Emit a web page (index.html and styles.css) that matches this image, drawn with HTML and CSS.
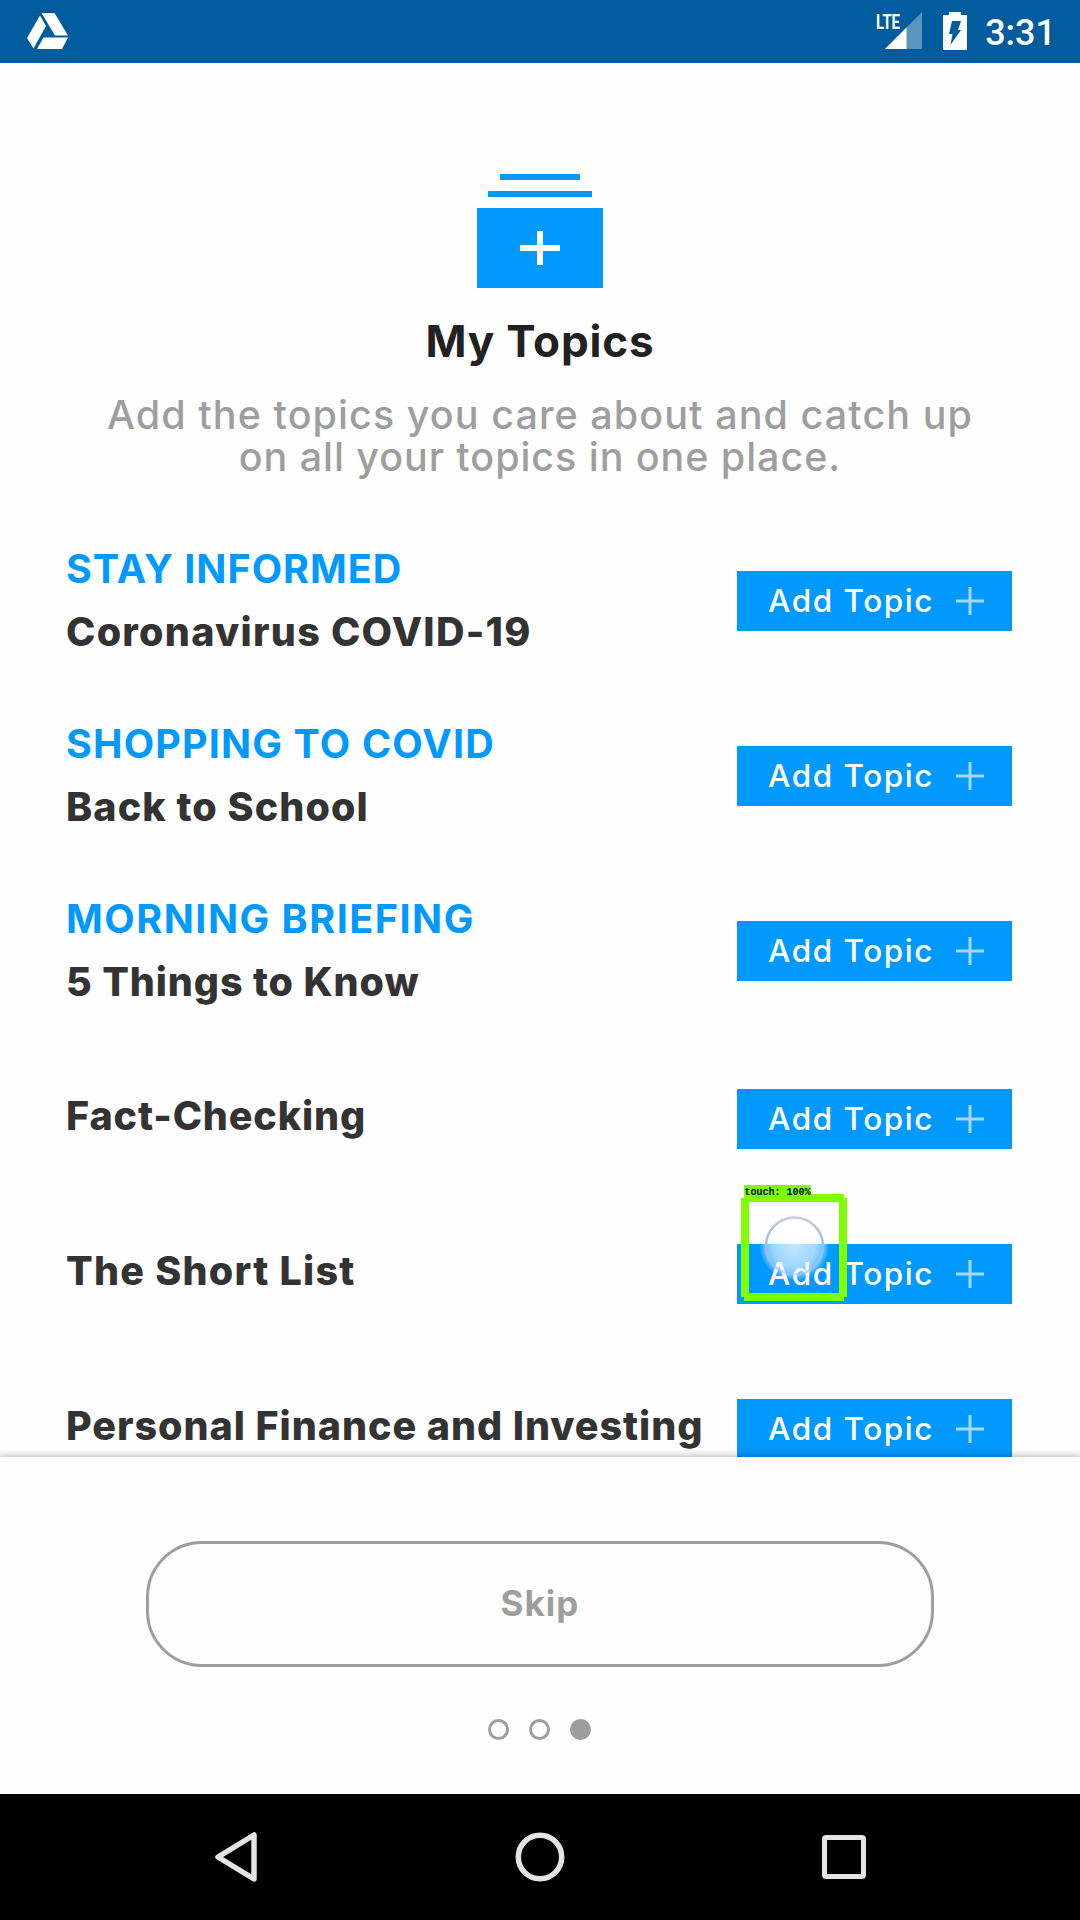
FILE: index.html
```html
<!DOCTYPE html>
<html lang="en">
<head>
<meta charset="utf-8">
<title>My Topics</title>
<link rel="stylesheet" href="styles.css">
</head>
<body>
<header class="status">
  <svg class="drive" width="42" height="38" viewBox="0 0 42 38"><path fill="#fff" d="M14.5 0h13l13.5 22.5H28zM13 2.5l6 10.500L6.500 35.500 0 25zM16.500 24.500h24.500l-6 11.500H10z"/></svg>
  <div class="status-right">
    <svg class="signal" width="50" height="40" viewBox="0 0 50 40"><path fill="#fff" fill-opacity=".35" d="M11 38L48 1v37z"/><path fill="#fff" d="M11 38l21.500-21.500V38z"/><text class="lte" x="2" y="18" textLength="24" lengthAdjust="spacingAndGlyphs">LTE</text></svg>
    <svg class="battery" width="24" height="38" viewBox="0 0 24 38"><path fill="#fff" d="M6 0h12v3h6v35H0V3h6z"/><path fill="#005c9c" d="M9 9h9l-3 9h3L7.500 33l2-11H6z"/></svg>
    <span class="clock">3:31</span>
  </div>
</header>

<main class="content">
  <section class="hero">
    <svg width="126" height="114" viewBox="0 0 126 114"><path fill="#0b98f5" d="M23 0h80v6H23zM11 17h104v6H11z"/><path fill="#0099ff" d="M0 34h126v80H0z"/><path fill="#fff" d="M43 71h40v6H43z"/><path fill="#fff" d="M60 57h6v34h-6z"/></svg>
    <h1 class="title">My Topics</h1>
    <p class="lead"><span class="lead-a">Add the topics you care about and catch up</span><br><span class="lead-b">on all your topics in one place.</span></p>
  </section>

  <ul class="topics">
    <li class="topic tall">
      <div class="label"><span class="category informed">STAY INFORMED</span><span class="name corona">Coronavirus COVID-19</span></div>
      <button class="add"><span>Add Topic</span><svg class="plus" width="28" height="28" viewBox="0 0 28 28"><path d="M0 14h28M14 0v28"/></svg></button>
    </li>
    <li class="topic tall">
      <div class="label"><span class="category shopping">SHOPPING TO COVID</span><span class="name school">Back to School</span></div>
      <button class="add"><span>Add Topic</span><svg class="plus" width="28" height="28" viewBox="0 0 28 28"><path d="M0 14h28M14 0v28"/></svg></button>
    </li>
    <li class="topic tall">
      <div class="label"><span class="category briefing">MORNING BRIEFING</span><span class="name things">5 Things to Know</span></div>
      <button class="add"><span>Add Topic</span><svg class="plus" width="28" height="28" viewBox="0 0 28 28"><path d="M0 14h28M14 0v28"/></svg></button>
    </li>
    <li class="topic">
      <div class="label"><span class="name fact">Fact-Checking</span></div>
      <button class="add"><span>Add Topic</span><svg class="plus" width="28" height="28" viewBox="0 0 28 28"><path d="M0 14h28M14 0v28"/></svg></button>
    </li>
    <li class="topic">
      <div class="label"><span class="name short">The Short List</span></div>
      <button class="add"><span>Add Topic</span><svg class="plus" width="28" height="28" viewBox="0 0 28 28"><path d="M0 14h28M14 0v28"/></svg></button>
      <div class="touch">
        <svg width="106" height="116" viewBox="0 0 106 116">
          <defs>
            <radialGradient id="glow" cx=".5" cy=".5" r=".5"><stop offset="0" stop-color="#fff" stop-opacity=".76"/><stop offset=".6" stop-color="#fff" stop-opacity=".62"/><stop offset=".84" stop-color="#fff" stop-opacity=".4"/><stop offset="1" stop-color="#fff" stop-opacity="0"/></radialGradient>
            <linearGradient id="ring" x1="0" y1="0" x2="0" y2="1"><stop offset="0" stop-color="#c9c7e2"/><stop offset=".5" stop-color="#a3b9e6"/><stop offset="1" stop-color="#a9c4ee" stop-opacity=".6"/></linearGradient>
          </defs>
          <circle cx="53.500" cy="61" r="35" fill="url(#glow)"/>
          <circle cx="53.500" cy="61" r="28.500" fill="none" stroke="url(#ring)" stroke-width="2.500"/>
          <path fill="#7fff00" d="M3 0h67v9h33v4h3v99h-3v4H3v-4H0V13h3zM8 17v91h90V17z" fill-rule="evenodd"/>
          <text class="touch-label" x="3.500" y="10">touch: 100%</text>
        </svg>
      </div>
    </li>
    <li class="topic">
      <div class="label"><span class="name finance">Personal Finance and Investing</span></div>
      <button class="add"><span>Add Topic</span><svg class="plus" width="28" height="28" viewBox="0 0 28 28"><path d="M0 14h28M14 0v28"/></svg></button>
    </li>
  </ul>
</main>

<footer class="footer">
  <button class="skip">Skip</button>
  <div class="dots"><i class="dot"></i><i class="dot"></i><i class="dot on"></i></div>
</footer>

<nav class="nav">
  <svg width="44" height="52" viewBox="0 0 44 52"><path d="M40 4v44L4 26z" fill="none" stroke="#e4e4e4" stroke-width="5.500" stroke-linejoin="round"/></svg>
  <svg width="50" height="52" viewBox="0 0 50 52"><circle cx="25" cy="26" r="21.700" fill="none" stroke="#e4e4e4" stroke-width="5.500"/></svg>
  <svg width="44" height="52" viewBox="0 0 44 52"><rect x="2.500" y="6.500" width="39" height="39" rx="1.500" fill="none" stroke="#e4e4e4" stroke-width="5"/></svg>
</nav>
</body>
</html>
```
FILE: styles.css
```css
* { box-sizing: border-box; }
body {
  margin: 0;
  width: 1080px;
  height: 1920px;
  overflow: hidden;
  display: flex;
  flex-direction: column;
  background: #fefefe;
  font-family: Inter, "Noto Sans", sans-serif;
}
svg { display: block; flex: none; }

.status {
  flex: none;
  height: 63px;
  padding: 0 24px 0 27px;
  display: flex;
  justify-content: space-between;
  align-items: flex-start;
  background: #005c9c;
  color: #fff;
}
.drive { margin-top: 13px; }
.status-right { display: flex; align-items: flex-start; }
.signal { margin-top: 11px; }
.lte { font: 700 20px Roboto, sans-serif; fill: #fff; }
.battery { margin: 12px 18px 0 19px; }
.clock { font: 500 36px/63px Roboto, sans-serif; padding-top: 2px; height: 63px; }

.content { flex: none; height: 1394px; overflow: hidden; }
.hero {
  padding-top: 111px;
  display: flex;
  flex-direction: column;
  align-items: center;
  height: 451px;
}
.title {
  margin: 23px 0 0;
  font-size: 44px;
  line-height: 61px;
  font-weight: 700;
  letter-spacing: .86px;
  color: #212121;
}
.lead {
  margin: 22px 0 0;
  font-size: 39.5px;
  font-weight: 450;
  line-height: 42px;
  text-align: center;
  white-space: nowrap;
  color: #9e9e9e;
}
.lead-a { letter-spacing: 1.06px; }
.lead-b { letter-spacing: .93px; }

.topics { margin: 0; padding: 0; list-style: none; }
.topic {
  position: relative;
  height: 155px;
  padding: 50px 68px 0 66px;
  display: flex;
  justify-content: space-between;
  align-items: flex-start;
}
.label {
  padding-top: 3px;
  display: flex;
  flex-direction: column;
  align-items: flex-start;
  gap: 15px;
  font-size: 39.5px;
  line-height: 48px;
  white-space: nowrap;
}
.tall { height: 175px; padding-top: 57px; }
.tall .label { padding: 0; margin-top: -26px; }
.category { font-weight: 700; color: #0099ff; }
.name { font-weight: 850; color: #333; }
.informed { letter-spacing: .99px; }
.shopping { letter-spacing: 1.15px; }
.briefing { letter-spacing: 1.51px; }
.corona { letter-spacing: 1.26px; }
.school { letter-spacing: 1.09px; }
.things { letter-spacing: .89px; }
.fact { letter-spacing: .84px; }
.short { letter-spacing: 1.25px; }
.finance { letter-spacing: .95px; }

.add {
  width: 275px;
  height: 60px;
  margin: 0;
  padding: 0 28px 0 31px;
  border: 0;
  display: flex;
  justify-content: space-between;
  align-items: center;
  background: #0099ff;
  color: #fff;
  font: 500 31.5px/59px Inter, sans-serif;
  letter-spacing: 1.54px;
}
.add span { padding-bottom: 1px; }
.plus { fill: none; stroke: #a6d9ff; stroke-width: 3; }

.touch { position: absolute; left: 741px; top: -9px; }
.touch-label { font: 700 10px "Liberation Mono", monospace; fill: #000; }

.footer {
  flex: none;
  position: relative;
  height: 337px;
  padding-top: 84px;
  display: flex;
  flex-direction: column;
  align-items: center;
  background: #fefefe;
  box-shadow: 0 -1px 7px rgba(0, 0, 0, .3);
}
.skip {
  width: 788px;
  height: 126px;
  margin: 0;
  padding: 0 0 2px;
  border: 3px solid #9e9e9e;
  border-radius: 56px;
  background: none;
  color: #9e9e9e;
  font: 700 35px/48px Inter, sans-serif;
  letter-spacing: 1.04px;
}
.dots { display: flex; gap: 20px; margin: 52px 2px 0 0; }
.dot { width: 21px; height: 21px; border: 3px solid #9e9e9e; border-radius: 50%; }
.dot.on { background: #9e9e9e; }

.nav {
  flex: none;
  position: relative;
  height: 126px;
  padding: 0 214px;
  display: flex;
  justify-content: space-between;
  align-items: center;
  background: #000;
}
```
